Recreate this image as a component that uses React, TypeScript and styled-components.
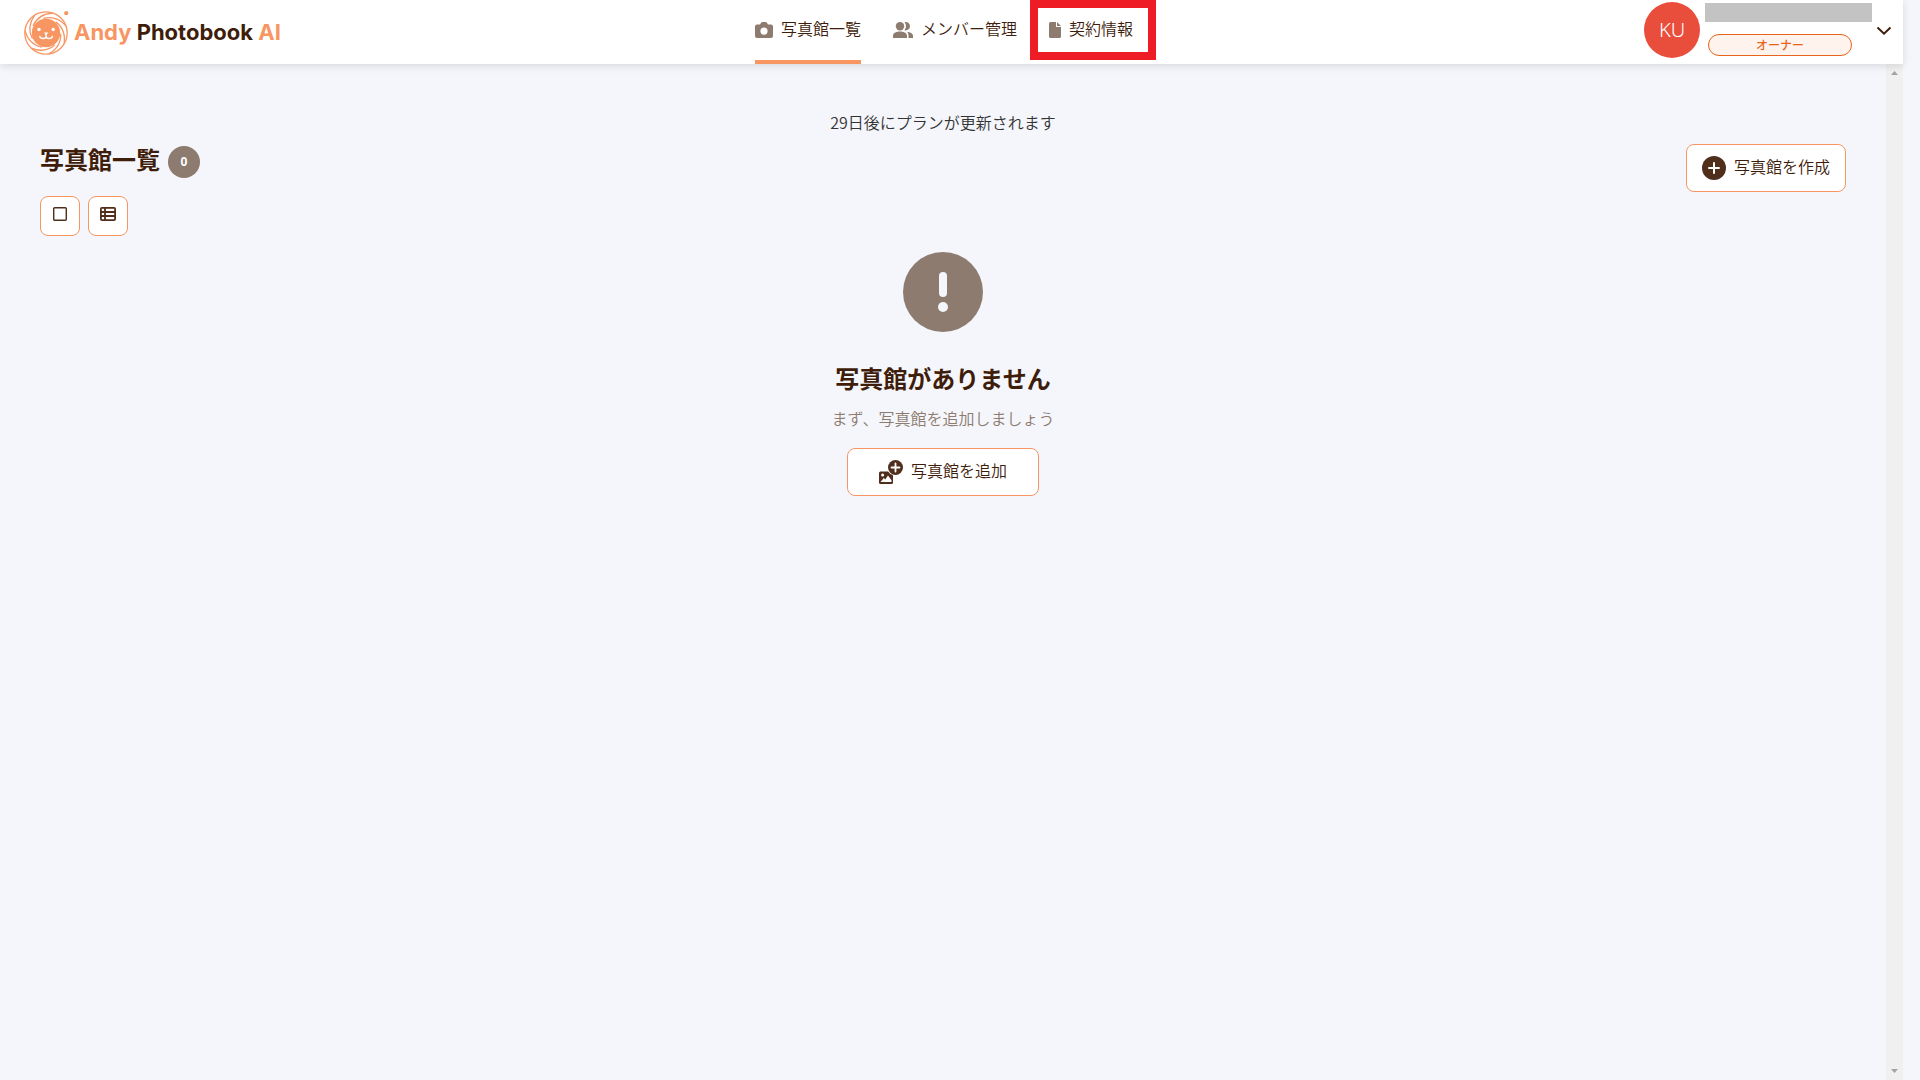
import React from "react";
import styled, { createGlobalStyle } from "styled-components";

const color = {
  page: "#f4f6fb",
  ink: "#3f1d0b",
  icon: "#502e1c",
  muted: "#8d7b6f",
  accent: "#f79663",
  owner: "#e8641b",
  avatar: "#e94e3d",
  alert: "#ee1c25",
};

const GlobalStyle = createGlobalStyle`
  *, *::before, *::after { box-sizing: border-box; }
  body {
    margin: 0;
    background: ${color.page};
    color: ${color.ink};
    font-family: "Noto Sans CJK JP", "Noto Sans", sans-serif;
    font-size: 16px;
    font-weight: 350;
    line-height: 24px;
  }
  button { font: inherit; color: inherit; cursor: pointer; }
  svg { display: block; flex: none; }
`;

const Shell = styled.div`
  display: flex;
  flex-direction: column;
  min-height: 100vh;
  margin-right: 17px;
`;

const Header = styled.header`
  position: relative;
  z-index: 1;
  display: grid;
  grid-template-columns: 1fr auto 1fr;
  height: 64px;
  padding-right: 15px;
  background: #fff;
  box-shadow: 0 2px 8px rgba(0, 0, 0, 0.12);
`;

const Brand = styled.a`
  display: flex;
  align-items: center;
  justify-self: start;
  gap: 4px;
  padding: 0 0 2px 24px;
  color: ${color.accent};
  font-family: Inter, "Open Sans", sans-serif;
  font-size: 22px;
  font-weight: 700;
  text-decoration: none;
`;

const BrandName = styled.span`
  padding-top: 2px;
  white-space: nowrap;
`;

const BrandStrong = styled.span`
  color: ${color.ink};
`;

const Nav = styled.nav`
  display: flex;
  gap: 32px;
`;

const NavLink = styled.a<{ $active?: boolean }>`
  position: relative;
  display: flex;
  align-items: center;
  gap: 8px;
  padding-bottom: ${(p) => (p.$active ? 0 : 4)}px;
  border-bottom: ${(p) => (p.$active ? `4px solid ${color.accent}` : "none")};
  color: ${color.ink};
  text-decoration: none;
  white-space: nowrap;

  svg { color: ${color.muted}; }
`;

const Label = styled.span`
  padding-bottom: 4px;
`;

const Highlight = styled.span`
  position: absolute;
  inset: 0 -23px 4px -19px;
  border: 8px solid ${color.alert};
  pointer-events: none;
`;

const Account = styled.div`
  display: flex;
  align-items: center;
  justify-self: end;
  padding-bottom: 4px;
`;

const Avatar = styled.span`
  display: grid;
  place-items: center;
  width: 56px;
  height: 56px;
  border-radius: 50%;
  background: ${color.avatar};
  color: #fff;
  font-family: "Noto Sans", "Open Sans", sans-serif;
  font-size: 20px;
`;

const AccountText = styled.div`
  display: flex;
  flex-direction: column;
  gap: 12px;
  margin-left: 5px;
  padding-bottom: 2px;
`;

const MaskedName = styled.span`
  width: 167px;
  height: 19px;
  background: #c3c3c3;
`;

const RoleBadge = styled.span`
  width: 144px;
  height: 22px;
  margin-left: 3px;
  border: 1px solid ${color.owner};
  border-radius: 11px;
  background: #fff3ee;
  color: ${color.owner};
  font-size: 12px;
  font-weight: 500;
  line-height: 20px;
  text-align: center;
`;

const MenuButton = styled.button`
  display: grid;
  place-items: center;
  width: 24px;
  height: 24px;
  margin-right: -8px;
  padding: 0;
  border: 0;
  background: none;
`;

const Body = styled.div`
  display: flex;
  flex: 1;
`;

const Main = styled.main`
  flex: 1;
  padding: 46px 40px 24px;
`;

const Notice = styled.p`
  margin: 0;
  padding-bottom: 10px;
  color: #333;
  text-align: center;
`;

const Toolbar = styled.div`
  display: flex;
  align-items: flex-start;
  justify-content: space-between;
`;

const TitleRow = styled.div`
  display: flex;
  align-items: center;
  gap: 8px;
  height: 36px;
`;

const Title = styled.h1`
  margin: 0;
  padding-bottom: 6px;
  font-size: 24px;
  font-weight: 700;
  line-height: 28px;
`;

const Count = styled.span`
  width: 32px;
  height: 32px;
  border-radius: 50%;
  background: ${color.muted};
  color: #fff;
  font-family: "Noto Sans", sans-serif;
  font-size: 12px;
  font-weight: 700;
  line-height: 32px;
  text-align: center;
`;

const ViewSwitch = styled.div`
  display: flex;
  gap: 8px;
  padding-top: 16px;
`;

const OutlineButton = styled.button`
  display: flex;
  align-items: center;
  justify-content: center;
  gap: 8px;
  border: 1px solid ${color.accent};
  border-radius: 8px;
  background: #fff;
`;

const ViewButton = styled(OutlineButton)`
  width: 40px;
  height: 40px;
  padding: 0 0 4px;
  color: ${color.icon};
`;

const ActionButton = styled(OutlineButton)<{ $wide?: boolean }>`
  height: 48px;
  padding: 0 ${(p) => (p.$wide ? 31 : 15)}px;
  white-space: nowrap;

  svg { color: ${color.icon}; }
`;

const Empty = styled.section`
  display: flex;
  flex-direction: column;
  align-items: center;
  padding-top: 16px;
`;

const EmptyTitle = styled.h2`
  margin: 0;
  padding: 28px 0 10px;
  font-size: 24px;
  font-weight: 700;
  line-height: 36px;
`;

const EmptyText = styled.p`
  margin: 0;
  padding-bottom: 18px;
  color: ${color.muted};
`;

const ScrollTrack = styled.div`
  display: flex;
  flex-direction: column;
  align-items: center;
  justify-content: space-between;
  width: 17px;
  padding: 6px 0;
  background: #f0f0f0;
  color: #a3a3a3;
`;

const BLADE_COUNT = 7;

function LogoMark() {
  return (
    <svg width="46" height="48" viewBox="0 0 46 48" fill="none" aria-hidden="true">
      <g stroke="currentColor" strokeWidth="1.3">
        <circle cx="22" cy="26" r="21.2" />
        {Array.from({ length: BLADE_COUNT }, (_, i) => (
          <path
            key={i}
            d="M28.700 6C20 6.500 12.500 11 9 19"
            transform={`rotate(${(i * 360) / BLADE_COUNT} 22 26)`}
          />
        ))}
      </g>
      <circle cx="22" cy="26" r="14.200" fill="currentColor" />
      <circle cx="42.200" cy="6.200" r="2.100" fill="currentColor" />
      <g fill="#fff">
        <circle cx="15" cy="22.500" r="1.700" />
        <circle cx="29.200" cy="22.500" r="1.700" />
        <path d="M19.700 25.500h4.800L22.100 28z" />
      </g>
      <path
        d="M22.100 27v2.500c0 1.400-1.400 2-3 2s-3-.6-3.200-2M22.100 29.500c0 1.400 1.400 2 3 2s3-.6 3.200-2"
        stroke="#fff"
        strokeWidth="1.500"
        strokeLinecap="round"
      />
    </svg>
  );
}

function CameraIcon() {
  return (
    <svg width="18" height="20" viewBox="0 0 18 20" fill="currentColor" aria-hidden="true">
      <path fillRule="evenodd" d="M5 4.500 6.100 2.800Q6.600 2 7.500 2h3q.9 0 1.400.8L13 4.500h3a2 2 0 0 1 2 2V16a2 2 0 0 1-2 2H2a2 2 0 0 1-2-2V6.500a2 2 0 0 1 2-2zM9 7.500a3.600 3.600 0 1 0 0 7.200 3.600 3.600 0 0 0 0-7.200z" />
    </svg>
  );
}

function MembersIcon() {
  return (
    <svg width="20" height="20" viewBox="0 0 20 20" fill="currentColor" aria-hidden="true">
      <circle cx="7" cy="6.200" r="4.200" />
      <path d="M0 18v-2.300C0 12.800 4 11.500 7 11.500s7 1.300 7 4.200V18zM11.500 2.200a4.200 4.200 0 1 1 0 8 6 6 0 0 0 0-8zM14 11.700c3 .4 6 1.500 6 4V18h-4.500v-2.300c0-1.700-.6-3-1.500-4z" />
    </svg>
  );
}

function FileIcon() {
  return (
    <svg width="12" height="20" viewBox="0 0 12 20" fill="currentColor" aria-hidden="true">
      <path d="M1.500 2H7v5h5v9.500a1.500 1.500 0 0 1-1.500 1.500h-9A1.500 1.500 0 0 1 0 16.500v-13A1.500 1.500 0 0 1 1.500 2zM8 2l4 4H8z" />
    </svg>
  );
}

function ChevronIcon() {
  return (
    <svg width="16" height="16" viewBox="0 0 16 16" fill="none" stroke="currentColor" strokeWidth="2" aria-hidden="true">
      <path d="m1.500 5.500 6.500 6.200 6.500-6.200" />
    </svg>
  );
}

function SquareIcon() {
  return (
    <svg width="16" height="16" viewBox="0 0 16 16" fill="none" stroke="currentColor" strokeWidth="1.400" aria-hidden="true">
      <rect x="1.700" y="1.700" width="12.600" height="12.600" rx="1" />
    </svg>
  );
}

function ListIcon() {
  return (
    <svg width="16" height="16" viewBox="0 0 16 16" fill="none" stroke="currentColor" strokeWidth="1.800" aria-hidden="true">
      <rect x="0.900" y="1.900" width="14.200" height="12.200" rx="1" />
      <path d="M1 6h14M1 10h14M5 2v12" />
    </svg>
  );
}

function PlusCircleIcon() {
  return (
    <svg width="24" height="24" viewBox="0 0 24 24" aria-hidden="true">
      <circle cx="12" cy="12" r="12" fill="currentColor" />
      <path d="M12 7v10M7 12h10" stroke="#fff" strokeWidth="2" strokeLinecap="round" />
    </svg>
  );
}

function AddPictureIcon() {
  return (
    <svg width="24" height="24" viewBox="0 0 24 24" aria-hidden="true">
      <rect y="11.500" width="14" height="12.500" rx="1.500" fill="currentColor" />
      <circle cx="3.600" cy="15" r="1.500" fill="#fff" />
      <path d="M1.500 22 4.800 18l1.400 1.400L9 15.500l3.500 4.700V22z" fill="#fff" />
      <circle cx="16.500" cy="7.500" r="8.300" fill="#fff" />
      <circle cx="16.500" cy="7.500" r="7.500" fill="currentColor" />
      <path d="M16.500 3.500v8M12.500 7.500h8" stroke="#fff" strokeWidth="1.800" strokeLinecap="round" />
    </svg>
  );
}

function EmptyMark() {
  return (
    <svg width="80" height="80" viewBox="0 0 80 80" aria-hidden="true">
      <circle cx="40" cy="40" r="40" fill={color.muted} />
      <rect x="36" y="20" width="8" height="25" rx="4" fill={color.page} />
      <circle cx="40" cy="55" r="5" fill={color.page} />
    </svg>
  );
}

function ScrollArrow({ down = false }: { down?: boolean }) {
  return (
    <svg width="7" height="5" viewBox="0 0 7 5" fill="currentColor" aria-hidden="true">
      <path d={down ? "M0 0h7L3.500 4z" : "M0 5h7L3.500 1z"} />
    </svg>
  );
}

export default function App() {
  return (
    <>
      <GlobalStyle />
      <Shell>
        <Header>
          <Brand href="#">
            <LogoMark />
            <BrandName>
              Andy <BrandStrong>Photobook</BrandStrong> AI
            </BrandName>
          </Brand>
          <Nav>
            <NavLink href="#studios" $active>
              <CameraIcon />
              <Label>写真館一覧</Label>
            </NavLink>
            <NavLink href="#members">
              <MembersIcon />
              <Label>メンバー管理</Label>
            </NavLink>
            <NavLink href="#contract">
              <FileIcon />
              <Label>契約情報</Label>
              <Highlight />
            </NavLink>
          </Nav>
          <Account>
            <Avatar>KU</Avatar>
            <AccountText>
              <MaskedName />
              <RoleBadge>オーナー</RoleBadge>
            </AccountText>
            <MenuButton type="button" aria-label="メニュー">
              <ChevronIcon />
            </MenuButton>
          </Account>
        </Header>
        <Body>
          <Main>
            <Notice>29日後にプランが更新されます</Notice>
            <Toolbar>
              <div>
                <TitleRow>
                  <Title>写真館一覧</Title>
                  <Count>0</Count>
                </TitleRow>
                <ViewSwitch>
                  <ViewButton type="button" aria-label="カード表示">
                    <SquareIcon />
                  </ViewButton>
                  <ViewButton type="button" aria-label="リスト表示">
                    <ListIcon />
                  </ViewButton>
                </ViewSwitch>
              </div>
              <ActionButton type="button">
                <PlusCircleIcon />
                <Label>写真館を作成</Label>
              </ActionButton>
            </Toolbar>
            <Empty>
              <EmptyMark />
              <EmptyTitle>写真館がありません</EmptyTitle>
              <EmptyText>まず、写真館を追加しましょう</EmptyText>
              <ActionButton type="button" $wide>
                <AddPictureIcon />
                <Label>写真館を追加</Label>
              </ActionButton>
            </Empty>
          </Main>
          <ScrollTrack aria-hidden="true">
            <ScrollArrow />
            <ScrollArrow down />
          </ScrollTrack>
        </Body>
      </Shell>
    </>
  );
}
